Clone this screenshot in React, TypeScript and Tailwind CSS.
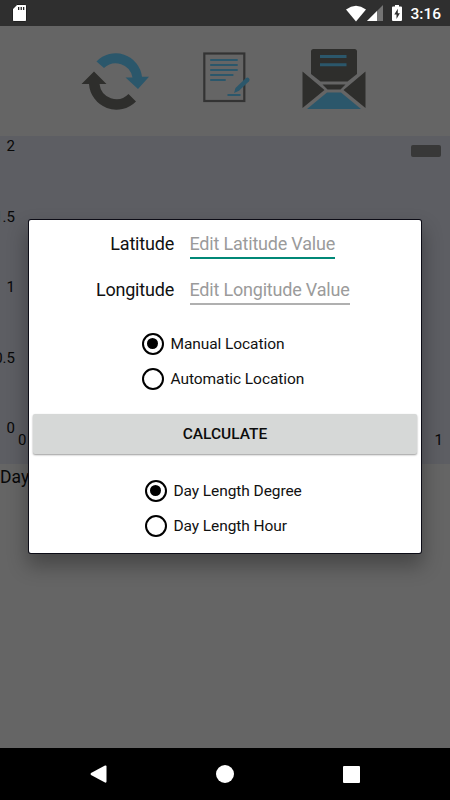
import clsx from "clsx"

const yLabels = ["2", "1.5", "1", "0.5", "0"]

const locationOptions = [
  { label: "Manual Location", checked: true },
  { label: "Automatic Location", checked: false },
]

const lengthOptions = [
  { label: "Day Length Degree", checked: true },
  { label: "Day Length Hour", checked: false },
]

function StatusBar() {
  return (
    <header className="flex h-[26px] shrink-0 items-center bg-[#2f2f2f] text-white">
      <svg className="ml-3 h-[18px] w-[15px]" viewBox="0 0 15 18">
        <path d="M5 0.5h8.2a1.3 1.3 0 0 1 1.3 1.3v14.4a1.3 1.3 0 0 1-1.3 1.3H1.8a1.3 1.3 0 0 1-1.3-1.3V5z" fill="white" stroke="black" strokeWidth="0.8" />
        <path d="M6.700 3v3M9.200 3v3M11.700 3v3" stroke="black" strokeWidth="1.1" />
      </svg>
      <svg className="ml-auto h-[17px] w-5" viewBox="0 0 20 17">
        <path d="M0 4.400Q10-2.800 20 4.400L10 16.500z" fill="white" />
      </svg>
      <svg className="ml-[1px] h-4 w-4" viewBox="0 0 16 16">
        <path d="M16 0v16H0z" fill="#747474" />
        <path d="M10 6v10H0z" fill="white" />
      </svg>
      <svg className="ml-[9px] h-4 w-[10px]" viewBox="0 0 10 16">
        <path d="M3 0h4v1.600h2a1 1 0 0 1 1 1V15a1 1 0 0 1-1 1H1a1 1 0 0 1-1-1V2.600a1 1 0 0 1 1-1h2z" fill="white" />
        <path d="M5.800 3.800L2.300 9.500h2.200V14L7.900 8.200H5.800z" fill="#2f2f2f" />
      </svg>
      <span className="mt-[2px] mr-[9px] ml-2 text-[15.500px] leading-[26px] font-medium">3:16</span>
    </header>
  )
}

function RefreshIcon() {
  return (
    <svg className="h-[58px] w-[68px]" viewBox="0 0 68 58">
      <path d="M15.500 9.500A26.500 26.500 0 0 1 61 24.800h7L57 37 44.500 25.500h7A17 17 0 0 0 23 16z" fill="#2b576b" />
      <path d="M0.500 32L13 19.500 25.500 32h-7A17 17 0 0 0 47.500 42L55 49.500A27.500 27.500 0 0 1 8 32z" fill="#2e2e2c" />
    </svg>
  )
}

function NoteIcon() {
  return (
    <svg className="h-[52px] w-[48px]" viewBox="0 0 48 52" fill="none">
      <rect x="1.300" y="2.500" width="40" height="47.500" stroke="#333" strokeWidth="2.200" />
      <path d="M7.200 9h27.500M7.200 14h27.500M7.200 19h27.500M7.200 24h23.200M7.200 29h15.500M24.500 44h13" stroke="#2b576b" strokeWidth="2.200" />
      <path d="M43 27a2.200 2.200 0 0 1 3 3.200L36 39.700 31 42l1.500-5z" fill="#2b576b" />
    </svg>
  )
}

function MailIcon() {
  return (
    <svg className="h-[60px] w-[64px]" viewBox="0 0 64 60">
      <path d="M11.500 0h41a2.500 2.500 0 0 1 2.500 2.500V25l-9.500 7.500H18.500L9 25V2.500A2.500 2.500 0 0 1 11.500 0z" fill="#2e2e2c" />
      <path d="M18 7.500h26.500M18 15.700h26.500" stroke="#2b576b" strokeWidth="3" />
      <path d="M.5 22.500V59L22.500 41zM63.500 22.500V59L41.500 41z" fill="#2e2e2c" />
      <path d="M20.500 35.500h23L38.500 40.500h-13z" fill="#2e2e2c" />
      <path d="M5 60L25 43.500h14L59 60z" fill="#2b576b" />
    </svg>
  )
}

function Toolbar() {
  return (
    <nav className="flex h-[110px] shrink-0 items-start pt-[23px] pl-[81px]">
      <div className="mt-[3px]">
        <RefreshIcon />
      </div>
      <div className="mt-[2px] ml-[54px]">
        <NoteIcon />
      </div>
      <div className="ml-[51px]">
        <MailIcon />
      </div>
    </nav>
  )
}

function Chart() {
  return (
    <section className="flex h-[328px] shrink-0 flex-col overflow-hidden bg-[#5d5e63] text-[15px] leading-5 text-[#080808]">
      <div className="flex h-[302px] justify-between">
        <div className="flex w-[15px] flex-col items-end justify-between">
          {yLabels.map((label) => (
            <span key={label}>{label}</span>
          ))}
        </div>
        <div className="mt-[9px] mr-[9px] h-3 w-[30px] rounded-[2px] bg-[#383838]" />
      </div>
      <div className="-mt-[8px] flex justify-between pr-[7px] pl-[18px]">
        <span>0</span>
        <span>1</span>
      </div>
    </section>
  )
}

function Field({ label, hint, focused }: { label: string; hint: string; focused?: boolean }) {
  return (
    <div className="flex h-[46px] items-start tracking-[-0.2px]">
      <span className="w-[145px] text-right leading-[48px] text-[#111]">{label}</span>
      <div
        className={clsx(
          "ml-[15.500px] h-[39px] border-b-2 leading-[48px] text-[#9b9b9b]",
          focused ? "border-[#008877]" : "border-[#b0b0b0]",
        )}
      >
        {hint}
      </div>
    </div>
  )
}

function Radio({ label, checked }: { label: string; checked: boolean }) {
  return (
    <div className="flex h-[35px] items-center gap-[7px]">
      <div className="flex size-[22px] items-center justify-center rounded-full border-2 border-black">
        {checked && <div className="size-[11px] rounded-full bg-black" />}
      </div>
      <span className="pt-[2px] text-[15.500px] leading-[35px] tracking-[-0.080px] text-[#111]">{label}</span>
    </div>
  )
}

function LocationDialog() {
  return (
    <div className="absolute top-[220px] left-[29px] flex h-[333px] w-[392px] flex-col rounded-[2px] bg-white text-[18px] shadow-[0_0_0_1px_#0c0c16,0_11px_20px_2px_rgba(0,0,0,0.3)]">
      <Field label="Latitude" hint="Edit Latitude Value" focused />
      <Field label="Longitude" hint="Edit Longitude Value" />
      <div className="mt-[14px] ml-[112.500px]">
        {locationOptions.map((option) => (
          <Radio key={option.label} {...option} />
        ))}
      </div>
      <button className="mx-[4px] mt-[18px] h-10 shrink-0 rounded-[2px] bg-[#d6d8d7] pt-[2px] text-[15.500px] font-medium text-[#0c0c0c] shadow-[0_1px_2px_rgba(0,0,0,0.4)]">
        CALCULATE
      </button>
      <div className="mt-[19px] ml-[115.500px]">
        {lengthOptions.map((option) => (
          <Radio key={option.label} {...option} />
        ))}
      </div>
    </div>
  )
}

function NavigationBar() {
  return (
    <footer className="flex h-[52px] shrink-0 items-center bg-black pl-[90px]">
      <svg className="h-[18px] w-[17px]" viewBox="0 0 17 18">
        <path d="M15 0.500Q16.500 0 16.500 1.500V16.500Q16.500 18 15 17.500L1 10Q0 9 1 8z" fill="white" />
      </svg>
      <div className="ml-[109px] size-[18px] rounded-full bg-white" />
      <div className="ml-[109px] size-[17px] rounded-[1px] bg-white" />
    </footer>
  )
}

export default function App() {
  return (
    <main className="relative flex h-[800px] w-[450px] flex-col overflow-hidden bg-[#656565] font-[Roboto,sans-serif]">
      <StatusBar />
      <Toolbar />
      <Chart />
      <p className="flex-1 text-[17.500px] leading-[26px] text-[#080808]">Day</p>
      <NavigationBar />
      <LocationDialog />
    </main>
  )
}
